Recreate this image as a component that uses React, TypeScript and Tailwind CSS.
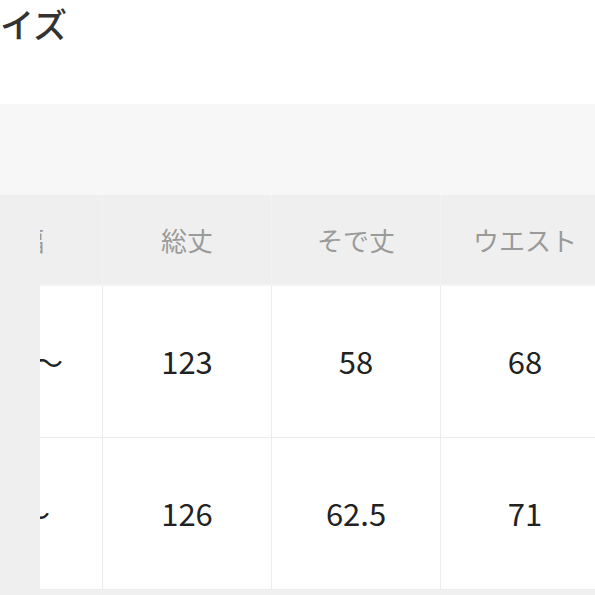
export default function App() {
  const font = { fontFamily: '"Noto Sans CJK JP", "Noto Sans", sans-serif' }
  const cols = [
    { head: '総丈', rows: ['123', '126'] },
    { head: 'そで丈', rows: ['58', '62.5'] },
    { head: 'ウエスト', rows: ['68', '71'] },
  ]

  return (
    <div className="w-[595px] h-[595px] overflow-hidden bg-white" style={font}>
      {/* Title (clipped by scroll) */}
      <div className="h-[104px] overflow-hidden">
        <h2 className="ml-[-34px] pt-[2px] text-[34px] leading-[44px] font-medium text-[#333] whitespace-nowrap">
          サイズ
        </h2>
      </div>

      {/* Band above table */}
      <div className="h-[91px] bg-[#f7f7f7]" />

      {/* Table */}
      <div className="flex bg-[#f0f0f0]">
        {/* sticky size column */}
        <div className="w-[40px] shrink-0 bg-[#efefef]" />

        <div className="flex flex-col">
          {/* header */}
          <div className="flex h-[91px] bg-[#efefef] border-b-2 border-[#f4f4f4]">
            <div className="w-[63px] shrink-0 flex items-center justify-end overflow-hidden whitespace-nowrap pr-[58px] text-[26px] text-[#9a9a9a] border-r border-[#f2f2f2]">
              身幅
            </div>
            {cols.map((c) => (
              <div
                key={c.head}
                className="w-[169px] shrink-0 flex items-center justify-center text-[26px] text-[#9a9a9a] border-r border-[#f2f2f2]"
              >
                {c.head}
              </div>
            ))}
          </div>

          {/* body rows */}
          {[0, 1].map((r) => (
            <div key={r} className="flex h-[152px] bg-white border-b border-[#ececec]">
              <div
                className={`w-[63px] shrink-0 flex items-center justify-end overflow-hidden whitespace-nowrap text-[30px] text-[#222] border-r border-[#ececec] ${
                  r === 0 ? 'pr-[39px]' : 'pr-[52px]'
                }`}
              >
                {r === 0 ? '150〜' : '160〜'}
              </div>
              {cols.map((c) => (
                <div
                  key={c.head}
                  className="w-[169px] shrink-0 flex items-center justify-center text-[31px] text-[#222] border-r border-[#ececec]"
                >
                  {c.rows[r]}
                </div>
              ))}
            </div>
          ))}
          <div className="h-[10px] bg-[#f0f0f0]" />
        </div>
      </div>
    </div>
  )
}
